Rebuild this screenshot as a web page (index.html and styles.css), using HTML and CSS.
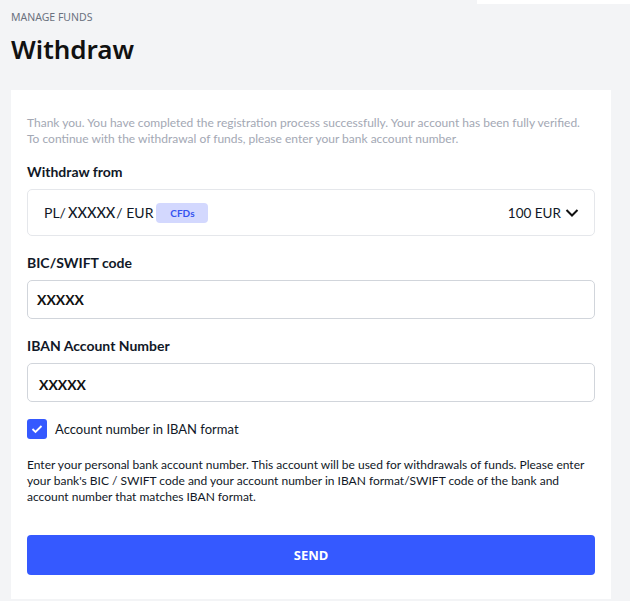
FILE: index.html
```html
<!DOCTYPE html>
<html lang="en">
<head>
<meta charset="utf-8">
<title>Withdraw</title>
<link rel="stylesheet" href="styles.css">
</head>
<body>
<div class="topstrip"></div>
<main class="page">
  <header class="head">
    <div class="eyebrow">MANAGE FUNDS</div>
    <h1 class="title">Withdraw</h1>
  </header>
  <section class="card">
    <p class="intro">Thank you. You have completed the registration process successfully. Your account has been fully verified. To continue with the withdrawal of funds, please enter your bank account number.</p>

    <div class="field field-first">
      <label class="label">Withdraw from</label>
      <div class="select">
        <div class="select-left">
          <span>PL/</span><span class="acc">XXXXX</span><span class="cur">/ EUR</span>
          <span class="badge">CFDs</span>
        </div>
        <div class="select-right">
          <span class="amount">100 EUR</span>
          <svg class="chev" width="14" height="10" viewBox="0 0 14 10"><path d="M1.5 2 L7 7.5 L12.5 2" fill="none" stroke="#111" stroke-width="2"/></svg>
        </div>
      </div>
    </div>

    <div class="field">
      <label class="label">BIC/SWIFT code</label>
      <div class="input">XXXXX</div>
    </div>

    <div class="field">
      <label class="label">IBAN Account Number</label>
      <div class="input input-iban">XXXXX</div>
    </div>

    <div class="check">
      <span class="box"><svg width="12" height="10" viewBox="0 0 12 10"><path d="M1.5 5 L4.5 8 L10.5 2" fill="none" stroke="#fff" stroke-width="1.8"/></svg></span>
      <span>Account number in IBAN format</span>
    </div>

    <p class="note">Enter your personal bank account number. This account will be used for withdrawals of funds. Please enter your bank's BIC / SWIFT code and your account number in IBAN format/SWIFT code of the bank and account number that matches IBAN format.</p>

    <button class="send">SEND</button>
  </section>
</main>
</body>
</html>
```
FILE: styles.css
```css
*, *::before, *::after { box-sizing: border-box; }
html, body {
  margin: 0;
  padding: 0;
  background: #f3f4f6;
  font-family: "Lato", "Noto Sans", sans-serif;
  color: #111827;
}
.topstrip {
  position: absolute;
  top: 0;
  right: 0;
  width: 153px;
  height: 4px;
  background: #ffffff;
}
.page {
  padding: 9px 19px 2px 11px;
}
.head {
  height: 81px;
}
.eyebrow {
  font-family: "Noto Sans", sans-serif;
  font-size: 10.5px;
  line-height: 16px;
  color: #6b7280;
}
.title {
  margin: 6px 0 0;
  font-family: "Noto Sans", sans-serif;
  font-size: 26px;
  line-height: 36px;
  font-weight: 600;
  color: #111;
}
.card {
  background: #fff;
  padding: 25px 16px 24px;
  display: flex;
  flex-direction: column;
}
.intro {
  margin: 0;
  font-size: 12px;
  line-height: 16px;
  color: #a3a8b4;
}
.field {
  display: flex;
  flex-direction: column;
}
.label {
  font-size: 14px;
  font-weight: 700;
  line-height: 20px;
  margin-top: 17px;
  margin-bottom: 7px;
  color: #111827;
}
.field-first .label { margin-top: 15px; margin-bottom: 7px; }
.select {
  height: 47px;
  border: 1px solid #e5e7eb;
  border-radius: 5px;
  display: flex;
  align-items: center;
  justify-content: space-between;
  padding: 0 15px 0 16px;
  font-size: 14px;
}
.select-left {
  display: flex;
  align-items: center;
  gap: 2px;
}
.acc { font-weight: 500; font-size: 14.5px; }
.cur { margin-left: -1px; }
.badge {
  margin-left: 1px;
  width: 52px;
  height: 20px;
  border-radius: 4px;
  background: #d3d8fe;
  color: #3553f0;
  font-size: 10px;
  font-weight: 700;
  display: flex;
  align-items: center;
  justify-content: center;
}
.select-right {
  display: flex;
  align-items: center;
  gap: 4px;
}
.amount { font-size: 13.5px; }
.input {
  height: 39px;
  border: 1px solid #d1d5db;
  border-radius: 5px;
  display: flex;
  align-items: center;
  padding: 0 9px;
  font-size: 14px;
  font-weight: 700;
  color: #111;
}
.input-iban { padding: 4px 11px 0; }
.check {
  display: flex;
  align-items: center;
  gap: 8px;
  margin-top: 17px;
  font-size: 13px;
  color: #111827;
}
.box {
  width: 20px;
  height: 20px;
  border-radius: 3px;
  background: #3559ff;
  display: flex;
  align-items: center;
  justify-content: center;
}
.note {
  margin: 18px 0 0;
  font-size: 12px;
  line-height: 16px;
  color: #111827;
}
.send {
  margin-top: 30px;
  height: 40px;
  border: 0;
  border-radius: 4px;
  background: #3559ff;
  color: #fff;
  font-family: "Noto Sans", sans-serif;
  font-size: 13px;
  font-weight: 700;
  width: 100%;
}
```
